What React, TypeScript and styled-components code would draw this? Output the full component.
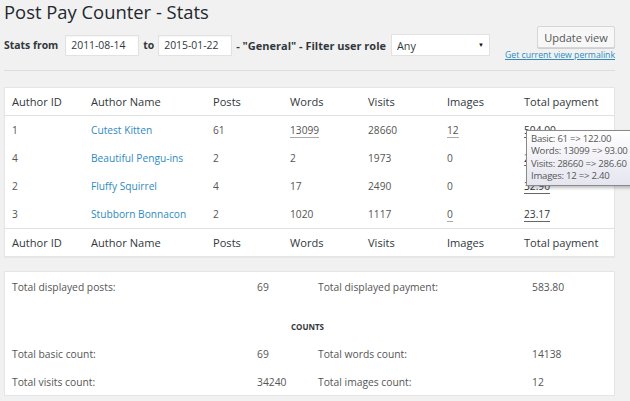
import * as React from 'react';
import styled, { createGlobalStyle } from 'styled-components';

const GlobalStyle = createGlobalStyle`
	html, body {
		margin: 0;
		padding: 0;
		background: #f1f1f1;
		overflow: hidden;
	}
	body {
		font-family: "Open Sans", "Liberation Sans", sans-serif;
		color: #444;
	}
`;

const Page = styled.div`
	position: relative;
	width: 611px;
	padding: 0 0 0 4px;
`;

const Title = styled.h1`
	margin: 0;
	font-size: 18.4px;
	line-height: 23px;
	font-weight: 400;
	color: #23282d;
`;

const Toolbar = styled.div`
	display: flex;
	justify-content: space-between;
	align-items: flex-start;
	margin-top: 3px;
	height: 34px;
`;

const Filters = styled.div`
	display: flex;
	align-items: center;
	margin-top: 8px;
	font-size: 10.4px;
	color: #32373c;
`;

const Label = styled.span<{ $size?: number }>`
	font-weight: 700;
	font-size: ${props => props.$size || 10.4}px;
	margin-right: 4px;
	margin-left: 4px;
	&:first-child {
		margin-left: 0;
		margin-right: 7px;
	}
`;

const DateInput = styled.div`
	box-sizing: border-box;
	width: 74px;
	height: 21px;
	line-height: 19px;
	padding: 0 5px;
	background: #fff;
	border: 1px solid #e2e2e2;
	box-shadow: inset 0 1px 2px rgba(0, 0, 0, 0.05);
	color: #32373c;
	font-size: 10.4px;
`;

const Select = styled.div`
	box-sizing: border-box;
	width: 99px;
	height: 22px;
	line-height: 21px;
	padding: 0 5px;
	margin-left: 1px;
	background: #fff;
	border: 1px solid #e2e2e2;
	color: #32373c;
	font-size: 10.8px;
	display: flex;
	justify-content: space-between;
	align-items: center;
	span {
		font-size: 6px;
		color: #111;
	}
`;

const Actions = styled.div`
	display: flex;
	flex-direction: column;
	align-items: flex-end;
`;

const Button = styled.button`
	box-sizing: border-box;
	width: 78px;
	height: 22px;
	padding: 0;
	background: #f7f7f7;
	border: 1px solid #d6d6d6;
	border-radius: 2px;
	box-shadow: 0 1px 0 #d0d0d0;
	color: #555;
	font-family: "Open Sans", sans-serif;
	font-size: 11px;
`;

const Permalink = styled.a`
	margin-top: 2px;
	font-size: 8.7px;
	line-height: 11px;
	color: #2e8bc0;
	text-decoration: underline;
`;

const Divider = styled.hr`
	margin: 10px 0 0;
	border: 0;
	border-top: 1px solid #ddd;
	height: 0;
`;

const Card = styled.div<{ $top: number }>`
	margin-top: ${props => props.$top}px;
	background: #fff;
	border: 1px solid #e5e5e5;
	box-shadow: 0 1px 1px rgba(0, 0, 0, 0.04);
`;

const Row = styled.div<{ $head?: boolean; $foot?: boolean }>`
	display: grid;
	grid-template-columns: 79px 122px 77px 78px 79px 77px 1fr;
	height: ${props => (props.$head || props.$foot ? 27 : 28)}px;
	align-items: center;
	border-bottom: ${props => (props.$head ? '1px solid #e1e1e1' : 'none')};
	border-top: ${props => (props.$foot ? '1px solid #e1e1e1' : 'none')};
	font-size: ${props => (props.$head || props.$foot ? 11.1 : 10.2)}px;
	color: ${props => (props.$head || props.$foot ? '#32373c' : '#555')};
`;

const Cell = styled.div`
	padding-left: 7px;
	white-space: nowrap;
`;

const AuthorLink = styled.a`
	color: #2e8bc0;
	text-decoration: none;
`;

const Marked = styled.span<{ $strong?: boolean }>`
	display: inline-block;
	line-height: 13px;
	border-bottom: 1px solid ${props => (props.$strong ? '#666' : '#aaa')};
	color: ${props => (props.$strong ? '#32373c' : '#555')};
`;

const Totals = styled.div`
	padding-top: 1px;
	display: grid;
	grid-template-columns: 245px 61px 214px 1fr;
	grid-template-rows: 28px 11px 28px 28px 27px;
	align-items: center;
	font-size: 10.3px;
	color: #555;
`;

const TotalCell = styled.div`
	padding-left: 7px;
	white-space: nowrap;
`;

const Spacer = styled.div`
	grid-column: 1 / -1;
`;

const SectionHead = styled.div`
	grid-column: 1 / -1;
	text-align: center;
	padding-right: 4px;
	font-size: 8px;
	font-weight: 700;
	color: #32373c;
`;

const Tooltip = styled.div`
	position: absolute;
	left: 526px;
	top: 130px;
	width: 110px;
	padding: 2px 4px 3px;
	border: 1px solid #8a8a8a;
	background: linear-gradient(#ffffff, #e4e5ef);
	box-shadow: 2px 2px 3px rgba(0, 0, 0, 0.25);
	font-size: 9.6px;
	line-height: 12.3px;
	letter-spacing: -0.25px;
	color: #575757;
	white-space: nowrap;
`;

const columns = ['Author ID', 'Author Name', 'Posts', 'Words', 'Visits', 'Images', 'Total payment'];

const authors = [
	{ id: 1, name: 'Cutest Kitten', posts: 61, words: 13099, visits: 28660, images: 12, payment: '504.00', wordsMark: true, imagesMark: true },
	{ id: 4, name: 'Beautiful Pengu-ins', posts: 2, words: 2, visits: 1973, images: 0, payment: '23.73' },
	{ id: 2, name: 'Fluffy Squirrel', posts: 4, words: 17, visits: 2490, images: 0, payment: '32.90' },
	{ id: 3, name: 'Stubborn Bonnacon', posts: 2, words: 1020, visits: 1117, images: 0, payment: '23.17', imagesMark: true },
];

const HeadRow: React.FC<{ foot?: boolean }> = ({ foot }) => (
	<Row $head={!foot} $foot={foot}>
		{columns.map(c => <Cell key={c}>{c}</Cell>)}
	</Row>
);

export default function App() {
	return (
		<>
			<GlobalStyle />
			<Page>
				<Title>Post Pay Counter - Stats</Title>
				<Toolbar>
					<Filters>
						<Label>Stats from</Label>
						<DateInput>2011-08-14</DateInput>
						<Label>to</Label>
						<DateInput>2015-01-22</DateInput>
						<Label $size={11}>- "General" - Filter user role</Label>
						<Select>Any<span>▼</span></Select>
					</Filters>
					<Actions>
						<Button>Update view</Button>
						<Permalink href="#">Get current view permalink</Permalink>
					</Actions>
				</Toolbar>
				<Divider />

				<Card $top={16}>
					<HeadRow />
					{authors.map(a => (
						<Row key={a.id}>
							<Cell>{a.id}</Cell>
							<Cell><AuthorLink href="#">{a.name}</AuthorLink></Cell>
							<Cell>{a.posts}</Cell>
							<Cell>{a.wordsMark ? <Marked>{a.words}</Marked> : a.words}</Cell>
							<Cell>{a.visits}</Cell>
							<Cell>{a.imagesMark ? <Marked>{a.images}</Marked> : a.images}</Cell>
							<Cell><Marked $strong>{a.payment}</Marked></Cell>
						</Row>
					))}
					<HeadRow foot />
				</Card>

				<Card $top={14}>
					<Totals>
						<TotalCell>Total displayed posts:</TotalCell>
						<TotalCell>69</TotalCell>
						<TotalCell>Total displayed payment:</TotalCell>
						<TotalCell>583.80</TotalCell>
						<Spacer />
						<SectionHead>COUNTS</SectionHead>
						<TotalCell>Total basic count:</TotalCell>
						<TotalCell>69</TotalCell>
						<TotalCell>Total words count:</TotalCell>
						<TotalCell>14138</TotalCell>
						<TotalCell>Total visits count:</TotalCell>
						<TotalCell>34240</TotalCell>
						<TotalCell>Total images count:</TotalCell>
						<TotalCell>12</TotalCell>
					</Totals>
				</Card>

				<Tooltip>
					Basic: 61 =&gt; 122.00<br />
					Words: 13099 =&gt; 93.00<br />
					Visits: 28660 =&gt; 286.60<br />
					Images: 12 =&gt; 2.40
				</Tooltip>
			</Page>
		</>
	);
}
